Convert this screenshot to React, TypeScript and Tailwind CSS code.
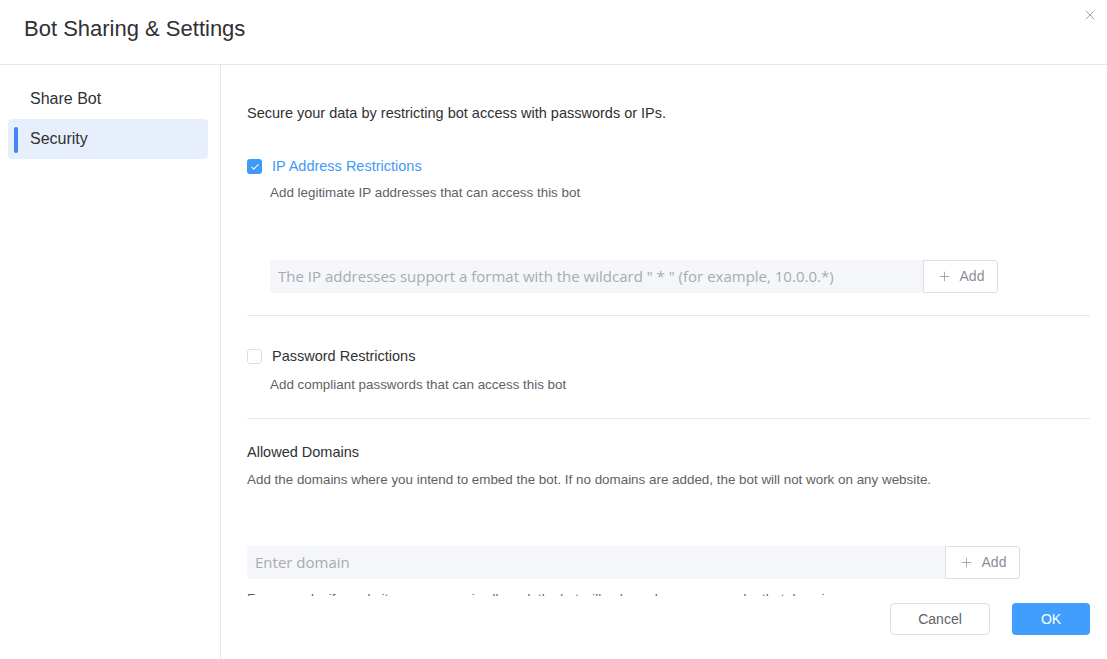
import { Check, Plus, X } from "lucide-react";

const sans = { fontFamily: '"Liberation Sans", Arial, sans-serif' };

function Checkbox({ checked }: { checked: boolean }) {
  return checked ? (
    <span className="flex h-[15px] w-[15px] shrink-0 items-center justify-center rounded-[3px] bg-[#3f9af7]">
      <Check className="h-[10px] w-[10px] text-white" strokeWidth={2.5} />
    </span>
  ) : (
    <span className="h-[15px] w-[15px] shrink-0 rounded-[3px] border border-[#dcdfe6] bg-white" />
  );
}

function AddInput({ placeholder, width }: { placeholder: string; width: string }) {
  return (
    <div className={`flex h-[33px] ${width}`}>
      <div
        className="flex flex-1 items-center rounded-l-[4px] bg-[#f4f6fa] pl-[8px] text-[15px] text-[#a8abb2]"
        style={{ fontFamily: '"Open Sans", "Noto Sans", sans-serif' }}
      >
        {placeholder}
      </div>
      <button className="flex w-[75px] items-center justify-center gap-[8px] rounded-r-[3px] border border-[#dcdfe6] bg-white text-[14px] text-[#8c8f96]">
        <Plus className="h-[15px] w-[15px]" strokeWidth={1.2} />
        Add
      </button>
    </div>
  );
}

export default function App() {
  return (
    <div className="flex h-[659px] w-[1107px] flex-col overflow-hidden bg-white text-[#303133]" style={sans}>
      <header className="relative h-[65px] shrink-0 border-b border-[#e4e6eb] pl-[24px] pt-[12px]">
        <h1 className="text-[22px] text-[#303133]">Bot Sharing &amp; Settings</h1>
        <X className="absolute right-[9px] top-[7px] h-[16px] w-[16px] text-[#909399]" strokeWidth={1.3} />
      </header>

      <div className="flex min-h-0 flex-1">
        <aside className="w-[221px] shrink-0 border-r border-[#e4e6eb] pl-[8px] pt-[14px]">
          <div className="flex h-[40px] w-[200px] items-center pl-[22px] text-[16px] text-[#303133]">Share Bot</div>
          <div className="relative flex h-[40px] w-[200px] items-center rounded-[4px] bg-[#e8effc] pl-[22px] text-[16px] text-[#303133]">
            <span className="absolute left-[6px] top-[8px] h-[26px] w-[4px] rounded-full bg-[#4285f4]" />
            Security
          </div>
        </aside>

        <main className="relative min-w-0 flex-1">
          <div className="h-[531px] overflow-hidden pl-[26px] pr-[17px] pt-[38px]">
            <p className="text-[14.5px] text-[#303133]">Secure your data by restricting bot access with passwords or IPs.</p>

            <div className="mt-[31px] flex items-center gap-[10px]">
              <Checkbox checked />
              <span className="text-[14.5px] text-[#3f9af7]">IP Address Restrictions</span>
            </div>
            <p className="mt-[5px] pl-[23px] text-[13.4px] leading-[20px] text-[#5f6166]">
              Add legitimate IP addresses that can access this bot
            </p>
            <div className="mt-[57px] pl-[23px]">
              <AddInput
                width="w-[728px]"
                placeholder={'The IP addresses support a format with the wildcard " * " (for example, 10.0.0.*)'}
              />
            </div>

            <div className="mt-[22px] border-t border-[#e6e8ec]" />

            <div className="mt-[30px] flex items-center gap-[10px]">
              <Checkbox checked={false} />
              <span className="text-[14.5px] text-[#303133]">Password Restrictions</span>
            </div>
            <p className="mt-[8px] pl-[23px] text-[13.4px] leading-[20px] text-[#5f6166]">
              Add compliant passwords that can access this bot
            </p>

            <div className="mt-[23px] border-t border-[#e6e8ec]" />

            <p className="mt-[23px] text-[14.5px] text-[#303133]">Allowed Domains</p>
            <p className="mt-[6px] text-[13.4px] leading-[20px] text-[#5f6166]">
              Add the domains where you intend to embed the bot. If no domains are added, the bot will not work on any website.
            </p>
            <div className="mt-[56px]">
              <AddInput width="w-[773px]" placeholder="Enter domain" />
            </div>
            <p className="mt-[10px] text-[13.4px] leading-[20px] text-[#5f6166]">
              For example, if a website www.a.com is allowed, the bot will only work on pages under that domain.
            </p>
          </div>

          <footer className="flex h-[63px] items-start justify-end gap-[22px] bg-white pr-[17px] pt-[7px]">
            <button className="h-[32px] w-[100px] rounded-[4px] border border-[#dcdfe6] bg-white text-[14px] text-[#606266]">
              Cancel
            </button>
            <button className="h-[32px] w-[78px] rounded-[4px] bg-[#409eff] text-[14px] text-white">OK</button>
          </footer>
        </main>
      </div>
    </div>
  );
}
